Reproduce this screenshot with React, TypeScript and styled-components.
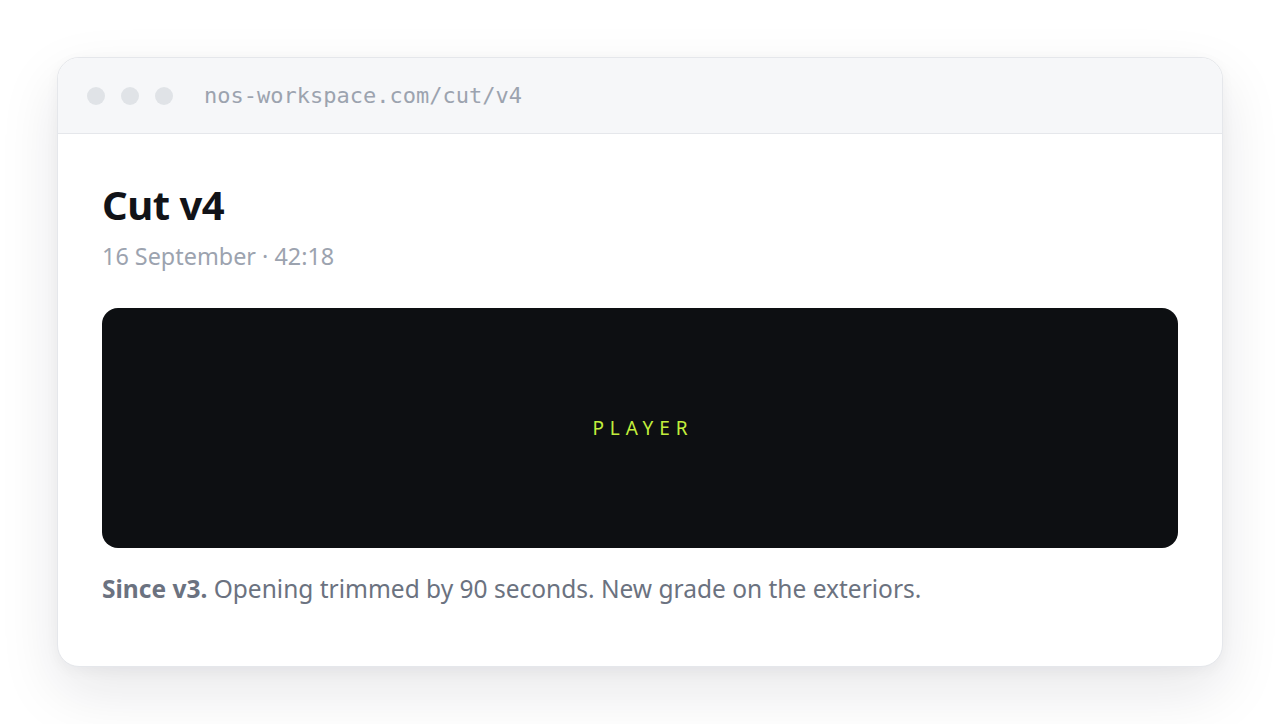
import React from 'react';
import styled, {createGlobalStyle} from 'styled-components';

const GlobalStyle = createGlobalStyle`
  html, body {
    margin: 0;
    padding: 0;
    background: #ffffff;
  }
  body {
    font-family: 'Noto Sans', 'Open Sans', sans-serif;
  }
`;

const Page = styled.div`
  min-height: 100vh;
  display: flex;
  align-items: center;
  justify-content: center;
  box-sizing: border-box;
`;

const Window = styled.div`
  width: 1164px;
  background: #ffffff;
  border: 1px solid #e5e7eb;
  border-radius: 22px;
  box-shadow: 0 24px 60px rgba(15, 23, 42, 0.1), 0 4px 14px rgba(15, 23, 42, 0.04);
  overflow: hidden;
`;

const TitleBar = styled.div`
  height: 75px;
  display: flex;
  align-items: center;
  padding: 0 29px;
  background: #f6f7f9;
  border-bottom: 1px solid #e5e7eb;
`;

const Dots = styled.div`
  display: flex;
  gap: 16px;
  margin-right: 31px;
`;

const Dot = styled.span`
  width: 18px;
  height: 18px;
  border-radius: 50%;
  background: #e0e3e7;
`;

const Url = styled.span`
  font-family: 'DejaVu Sans Mono', 'Liberation Mono', monospace;
  font-size: 22px;
  color: #9ca3af;
`;

const Body = styled.div`
  padding: 47px 44px 60px;
  display: flex;
  flex-direction: column;
`;

const Title = styled.h1`
  margin: 0;
  font-size: 40px;
  font-weight: 700;
  color: #111318;
  line-height: 48px;
  letter-spacing: -0.5px;
`;

const Meta = styled.div`
  margin-top: 12px;
  font-size: 23.4px;
  line-height: 31px;
  color: #9ca3af;
`;

const Player = styled.div`
  margin-top: 36px;
  height: 240px;
  border-radius: 16px;
  background: #0d0f12;
  display: flex;
  align-items: center;
  justify-content: center;
`;

const PlayerLabel = styled.span`
  font-size: 19px;
  letter-spacing: 0.31em;
  margin-right: -0.31em;
  color: #c2ee3c;
`;

const Note = styled.p`
  margin: 24px 0 0;
  font-size: 24.5px;
  color: #6b7280;
  line-height: 34px;

  strong {
    font-weight: 700;
  }
`;

const App: React.FC = () => {
  return (
    <>
      <GlobalStyle />
      <Page>
        <Window>
          <TitleBar>
            <Dots>
              <Dot />
              <Dot />
              <Dot />
            </Dots>
            <Url>nos-workspace.com/cut/v4</Url>
          </TitleBar>
          <Body>
            <Title>Cut v4</Title>
            <Meta>16 September · 42:18</Meta>
            <Player>
              <PlayerLabel>PLAYER</PlayerLabel>
            </Player>
            <Note>
              <strong>Since v3.</strong> Opening trimmed by 90 seconds. New grade on the exteriors.
            </Note>
          </Body>
        </Window>
      </Page>
    </>
  );
};

export default App;
